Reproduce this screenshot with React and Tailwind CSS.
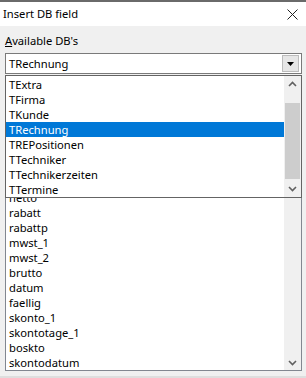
import { useState } from 'react'

const tables = ['TExtra', 'TFirma', 'TKunde', 'TRechnung', 'TREPositionen', 'TTechniker', 'TTechnikerzeiten', 'TTermine']
const fields = ['id', 'nummer', 'kunde', 'firma', 'techniker', 'betreff', 'text', 'netto', 'rabatt', 'rabattp', 'mwst_1', 'mwst_2', 'brutto', 'datum', 'faellig', 'skonto_1', 'skontotage_1', 'boskto', 'skontodatum']

function Chevron({ up }) {
  return (
    <svg width="9" height="6" viewBox="0 0 9 6" className="block">
      <path d={up ? 'M1 5 L4.5 1.5 L8 5' : 'M1 1 L4.5 4.5 L8 1'} fill="none" stroke="#606060" strokeWidth="1.6" />
    </svg>
  )
}

export default function App() {
  const [selected, setSelected] = useState('TRechnung')
  const [open, setOpen] = useState(true)

  return (
    <div className="relative w-[306px] h-[378px] overflow-hidden bg-[#f0f0f0] text-[11.2px] text-black" style={{ fontFamily: '"Noto Sans", "Open Sans", sans-serif' }}>
      <div className="h-[26px] bg-white border-t-2 border-[#6a6a6a] flex items-center justify-between pl-[3px] pr-[8px]">
        <span className="leading-[15px] -mt-[1px]">Insert DB field</span>
        <svg width="11" height="11" viewBox="0 0 11 11">
          <path d="M0.5 0.5 L10.5 10.5 M10.5 0.5 L0.5 10.5" stroke="#222" strokeWidth="1" />
        </svg>
      </div>

      <div className="px-[5px]">
        <div className="mt-[7px] h-[15px] leading-[15px]"><span className="underline underline-offset-[1px]">A</span>vailable DB's</div>

        <div className="mt-[5px] w-[297px] h-[21px] border border-[#7a7a7a] bg-white flex items-center justify-between pl-[3px] pr-[2px]" onClick={() => setOpen(!open)}>
          <span className="leading-[15px]">{selected}</span>
          <div className="w-[17px] h-[17px] bg-[#e6e6e6] border border-[#bcbcbc] flex items-center justify-center">
            <svg width="7" height="4" viewBox="0 0 7 4"><path d="M0 0 H7 L3.5 4 Z" fill="#000" /></svg>
          </div>
        </div>

        <div className="mt-[10px] w-[297px] h-[287px] border border-[#828790] bg-white flex">
          <div className="flex-1 overflow-hidden">
            {fields.map(f => (
              <div key={f} className="h-[15px] leading-[15px] pl-[3px] whitespace-nowrap">{f}</div>
            ))}
          </div>
          <div className="w-[17px] bg-[#f0f0f0] flex flex-col justify-end items-center pb-[4px]">
            <Chevron />
          </div>
        </div>
      </div>

      <div className="absolute left-0 right-0 bottom-0 h-[2px] bg-[#dedede]" />

      {open && (
        <div className="absolute top-[75px] left-[5px] w-[297px] h-[123px] border border-[#646464] bg-white flex">
          <div className="flex-1 pt-[1px]">
            {tables.map(t => (
              <div
                key={t}
                onClick={() => { setSelected(t); setOpen(false) }}
                className={`h-[15px] leading-[15px] pl-[3px] ${t === selected ? 'bg-[#0078d7] text-white' : ''}`}
              >
                {t}
              </div>
            ))}
          </div>
          <div className="w-[17px] bg-[#f0f0f0] flex flex-col items-center">
            <div className="h-[17px] pt-[5px] flex justify-center"><Chevron up /></div>
            <div className="flex-1 w-full flex flex-col pt-[10px] pb-[1px] px-[1px]">
              <div className="flex-1 bg-[#cdcdcd]" />
            </div>
            <div className="h-[17px] pt-[6px] flex justify-center"><Chevron /></div>
          </div>
        </div>
      )}
    </div>
  )
}
